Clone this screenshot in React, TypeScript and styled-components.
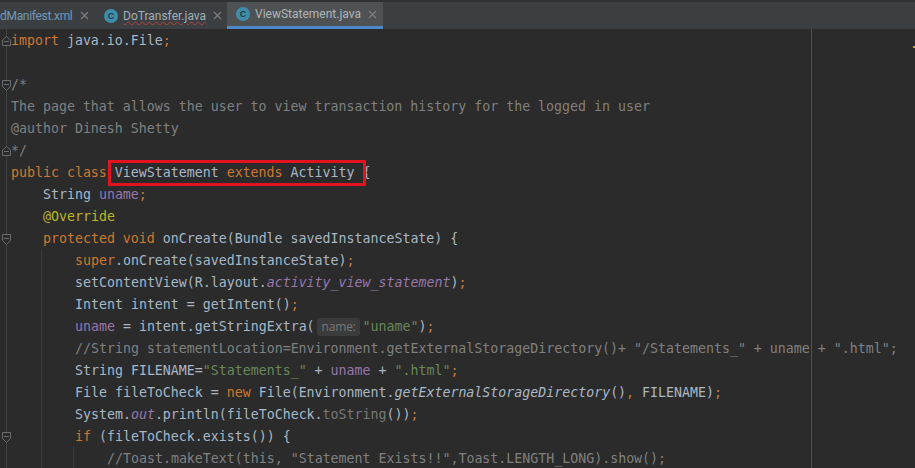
import React from 'react';
import styled, { createGlobalStyle } from 'styled-components';

const GlobalStyle = createGlobalStyle`
  html, body {
    margin: 0;
    padding: 0;
    background: #2b2b2b;
    overflow: hidden;
  }
`;

const Window = styled.div`
  position: relative;
  width: 915px;
  height: 468px;
  overflow: hidden;
  background: #2b2b2b;
`;

const TabBar = styled.div`
  display: flex;
  height: 27px;
  border-top: 2px solid #2f3233;
  background: #3c3f41;
`;

const Tab = styled.div<{ $active?: boolean; $width: number }>`
  display: flex;
  align-items: center;
  box-sizing: border-box;
  width: ${({ $width }) => $width}px;
  height: 27px;
  padding-left: 9px;
  background: ${({ $active }) => ($active ? '#4e5254' : 'transparent')};
  border-bottom: ${({ $active }) => ($active ? '3px solid #4a88c7' : '0')};
`;

const FirstTab = styled(Tab)`
  padding-left: 0;
`;

const FileIcon = styled.span`
  display: flex;
  align-items: center;
  justify-content: center;
  flex: none;
  width: 14px;
  height: 14px;
  margin-right: 5px;
  border-radius: 50%;
  background: #3f8dab;
  color: #1f3b47;
  font: bold 9px 'Liberation Sans', sans-serif;
`;

const labelColors = {
  plain: '#b0b5b8',
  error: '#a3aeb6',
  modified: '#6f9ab8',
};

const TabLabel = styled.span<{ $tone: keyof typeof labelColors }>`
  color: ${({ $tone }) => labelColors[$tone]};
  font: 12px 'Roboto', sans-serif;
  letter-spacing: ${({ $tone }) => ($tone === 'modified' ? '-0.3px' : '0')};
  white-space: nowrap;
  text-decoration: ${({ $tone }) => ($tone === 'error' ? 'underline wavy #b0413e 1px' : 'none')};
`;

const CloseMark = styled.svg`
  margin-left: 7px;
  flex: none;
`;

const Editor = styled.div`
  position: relative;
  height: 439px;
  box-sizing: border-box;
  padding-top: 1px;
`;

const Gutter = styled.div`
  position: absolute;
  top: 0;
  bottom: 0;
  left: 6px;
  width: 1px;
  background: #3e4142;
`;

const IndentGuide = styled.div<{ $left: number; $top: number }>`
  position: absolute;
  top: ${({ $top }) => $top}px;
  bottom: 0;
  left: ${({ $left }) => $left}px;
  width: 1px;
  background: #3b3b3b;
`;

const RightMargin = styled.div`
  position: absolute;
  top: 0;
  bottom: 0;
  left: 811px;
  width: 1px;
  background: #505152;
`;

const StripeMark = styled.div`
  position: absolute;
  top: 17px;
  right: 0;
  width: 2px;
  height: 2px;
  background: #b8a82e;
`;

const Line = styled.div<{ $indent?: number }>`
  position: relative;
  height: 22px;
  padding-left: ${({ $indent = 0 }) => 11 + $indent * 32}px;
  color: #a9b7c6;
  font: 13.28px/22px 'DejaVu Sans Mono', 'Liberation Mono', monospace;
  white-space: pre;
`;

const tokenColors = {
  kw: '#cc7832',
  field: '#9876aa',
  str: '#6a8759',
  com: '#808080',
  ann: '#bbb529',
  dim: '#787878',
};

const Tok = styled.span<{ $k: keyof typeof tokenColors; $italic?: boolean }>`
  color: ${({ $k }) => tokenColors[$k]};
  font-style: ${({ $italic }) => ($italic ? 'italic' : 'normal')};
`;

const Italic = styled.span`
  font-style: italic;
`;

const Highlight = styled.span`
  position: relative;
  &::after {
    content: '';
    position: absolute;
    top: -5px;
    bottom: -6px;
    left: -7px;
    right: -12px;
    border: 3px solid #e3121e;
  }
`;

const ParamHint = styled.span`
  display: inline-block;
  box-sizing: border-box;
  width: 43px;
  height: 18px;
  margin: 0 3px 0 2px;
  padding-left: 5px;
  border-radius: 3px;
  background: #3b3b3b;
  color: #787878;
  font: 12px/18px 'Open Sans', sans-serif;
  letter-spacing: -0.2px;
  vertical-align: 0;
`;

const FoldIcon = styled.svg`
  position: absolute;
  top: 6px;
  left: 2px;
`;

const FoldUp = () => (
  <FoldIcon width="9" height="10" viewBox="0 0 9 10" fill="#2b2b2b" stroke="#6b6d6e">
    <path d="M.5 9.500h8V4L4.500 .5 .5 4z" />
    <path d="M2 5.500h5" />
  </FoldIcon>
);

const FoldDown = () => (
  <FoldIcon width="9" height="11" viewBox="0 0 9 11" fill="#2b2b2b" stroke="#6b6d6e">
    <path d="M.5 .5h8V6.500L4.500 10.500 .5 6.500z" />
    <path d="M2 4.500h5" />
  </FoldIcon>
);

const Close = () => (
  <CloseMark width="9" height="9" viewBox="0 0 9 9" stroke="#7d8285" strokeWidth="1.1">
    <path d="M1 1l7 7M8 1L1 8" />
  </CloseMark>
);

const App: React.FC = () => (
  <Window>
    <GlobalStyle />
    <TabBar>
      <FirstTab $width={95}>
        <TabLabel $tone="modified">dManifest.xml</TabLabel>
        <Close />
      </FirstTab>
      <Tab $width={132}>
        <FileIcon>C</FileIcon>
        <TabLabel $tone="error">DoTransfer.java</TabLabel>
        <Close />
      </Tab>
      <Tab $active $width={156}>
        <FileIcon>C</FileIcon>
        <TabLabel $tone="plain">ViewStatement.java</TabLabel>
        <Close />
      </Tab>
    </TabBar>
    <Editor>
      <Gutter />
      <IndentGuide $left={41} $top={220} />
      <IndentGuide $left={73} $top={418} />
      <RightMargin />
      <StripeMark />

      <Line>
        <FoldUp />
        <Tok $k="kw">import</Tok> java.io.File<Tok $k="kw">;</Tok>
      </Line>
      <Line />
      <Line>
        <FoldDown />
        <Tok $k="com">/*</Tok>
      </Line>
      <Line><Tok $k="com">The page that allows the user to view transaction history for the logged in user</Tok></Line>
      <Line><Tok $k="com">@author Dinesh Shetty</Tok></Line>
      <Line>
        <FoldUp />
        <Tok $k="com">*/</Tok>
      </Line>
      <Line>
        <Tok $k="kw">public class</Tok>{' '}
        <Highlight>
          ViewStatement <Tok $k="kw">extends</Tok> Activity
        </Highlight>{' '}
        {'{'}
      </Line>
      <Line $indent={1}>
        String <Tok $k="field">uname</Tok><Tok $k="kw">;</Tok>
      </Line>
      <Line $indent={1}><Tok $k="ann">@Override</Tok></Line>
      <Line $indent={1}>
        <FoldDown />
        <Tok $k="kw">protected void</Tok> onCreate(Bundle savedInstanceState) {'{'}
      </Line>
      <Line $indent={2}>
        <Tok $k="kw">super</Tok>.onCreate(savedInstanceState)<Tok $k="kw">;</Tok>
      </Line>
      <Line $indent={2}>
        setContentView(R.layout.<Tok $k="field" $italic>activity_view_statement</Tok>)<Tok $k="kw">;</Tok>
      </Line>
      <Line $indent={2}>
        Intent intent = getIntent()<Tok $k="kw">;</Tok>
      </Line>
      <Line $indent={2}>
        <Tok $k="field">uname</Tok> = intent.getStringExtra(<ParamHint>name:</ParamHint>
        <Tok $k="str">"uname"</Tok>)<Tok $k="kw">;</Tok>
      </Line>
      <Line $indent={2}>
        <Tok $k="com">//String statementLocation=Environment.getExternalStorageDirectory()+ "/Statements_" + uname + ".html";</Tok>
      </Line>
      <Line $indent={2}>
        String FILENAME=<Tok $k="str">"Statements_"</Tok> + <Tok $k="field">uname</Tok> + <Tok $k="str">".html"</Tok><Tok $k="kw">;</Tok>
      </Line>
      <Line $indent={2}>
        File fileToCheck = <Tok $k="kw">new</Tok> File(Environment.<Italic>getExternalStorageDirectory</Italic>()<Tok $k="kw">,</Tok> FILENAME)<Tok $k="kw">;</Tok>
      </Line>
      <Line $indent={2}>
        System.<Tok $k="field" $italic>out</Tok>.println(fileToCheck.<Tok $k="dim">toString</Tok>())<Tok $k="kw">;</Tok>
      </Line>
      <Line $indent={2}>
        <FoldDown />
        <Tok $k="kw">if</Tok> (fileToCheck.exists()) {'{'}
      </Line>
      <Line $indent={3}>
        <Tok $k="com">//Toast.makeText(this, "Statement Exists!!",Toast.LENGTH_LONG).show();</Tok>
      </Line>
    </Editor>
  </Window>
);

export default App;
